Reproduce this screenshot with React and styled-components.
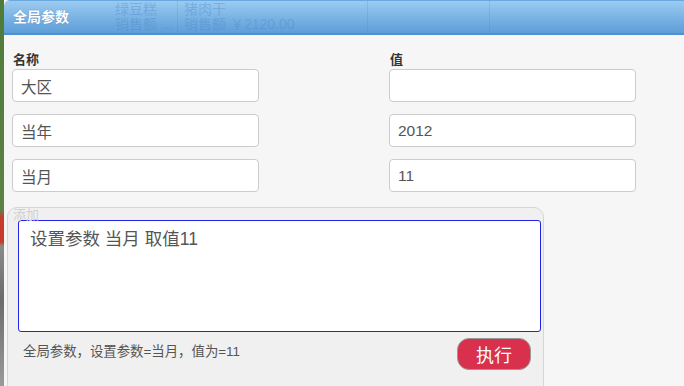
import React from 'react'
import styled, { createGlobalStyle } from 'styled-components'

const GlobalStyle = createGlobalStyle`
  html, body {
    margin: 0;
    padding: 0;
    background: #f5f5f5;
    font-family: "Microsoft YaHei", "Liberation Sans", "Noto Sans CJK SC", sans-serif;
  }
`

const Page = styled.div`
  display: flex;
  width: 684px;
  height: 386px;
  overflow: hidden;
`

const SideStrip = styled.div`
  width: 4px;
  flex-shrink: 0;
  background: linear-gradient(
    to bottom,
    #4f7a3a 0px,
    #5d8246 210px,
    #c83a2a 218px,
    #c83a2a 242px,
    #8a8a8a 246px,
    #6c6c6c 300px,
    #9a9a9a 386px
  );
`

const Dialog = styled.div`
  flex: 1;
  display: flex;
  flex-direction: column;
  background: #f6f6f6;
  border-top-left-radius: 6px;
  overflow: hidden;
`

const Header = styled.div`
  position: relative;
  flex-shrink: 0;
  height: 35px;
  box-sizing: border-box;
  display: flex;
  align-items: center;
  padding-left: 9px;
  background: linear-gradient(to bottom, #9ccbf0 0%, #7eb6e6 45%, #5e9ed8 100%);
  border-top: 1px solid #6aa8e0;
  border-bottom: 2px solid #4d8fd0;
  overflow: hidden;
`

const Title = styled.h1`
  position: relative;
  z-index: 1;
  margin: 0 0 2px;
  font-size: 14px;
  font-weight: bold;
  color: #ffffff;
  text-shadow: 0 0 1px rgba(40, 90, 160, 0.6);
`

const Ghost = styled.div`
  position: absolute;
  top: 0;
  left: ${p => p.left}px;
  width: ${p => p.width}px;
  height: 100%;
  padding: 1px 6px 0;
  box-sizing: border-box;
  font-size: 14px;
  line-height: 15px;
  color: rgba(70, 130, 200, 0.35);
  border-right: 1px solid rgba(70, 130, 200, 0.22);
  white-space: nowrap;
  overflow: hidden;
`

const Body = styled.div`
  flex: 1;
  padding: 17px 0 0 8px;
`

const FormGrid = styled.div`
  display: grid;
  grid-template-columns: 247px 247px;
  column-gap: 130px;
`

const Column = styled.div`
  display: flex;
  flex-direction: column;
  gap: 12px;
`

const Label = styled.label`
  display: block;
  font-size: 13px;
  font-weight: bold;
  color: #333;
  line-height: 15px;
  margin-bottom: -10px;
  padding-left: 1px;
`

const Input = styled.input`
  box-sizing: border-box;
  width: 247px;
  height: 33px;
  padding: 0 8px;
  border: 1px solid #cccccc;
  border-radius: 4px;
  background: #fff;
  font-family: inherit;
  font-size: 15.5px;
  color: #555;
  outline: none;
`

const Fieldset = styled.div`
  margin: 15px 0 0 -5px;
  width: 537px;
  height: 200px;
  box-sizing: border-box;
  border: 1px solid #d6d6d6;
  border-radius: 10px;
  background: #f0f0f0;
  padding: 0 2px 0 10px;
`

const Legend = styled.div`
  height: 12px;
  font-size: 13px;
  line-height: 14px;
  color: #d0d0d0;
  margin-left: -5px;
`

const TextArea = styled.textarea`
  display: block;
  box-sizing: border-box;
  width: 523px;
  height: 112px;
  padding: 4px 11px;
  border: 1px solid #2222ee;
  border-radius: 3px;
  background: #fff;
  resize: none;
  font-family: inherit;
  font-size: 17.5px;
  color: #555;
  outline: none;
`

const Footer = styled.div`
  display: flex;
  justify-content: space-between;
  align-items: flex-start;
  padding: 6px 10px 0 5px;
`

const Summary = styled.span`
  font-size: 13.4px;
  color: #555;
  margin-top: 2px;
`

const RunButton = styled.button`
  width: 74px;
  height: 32px;
  border: 1px solid #999;
  border-radius: 12px;
  background: #d9304e;
  color: #fff;
  font-family: inherit;
  font-size: 18px;
  cursor: pointer;
`

const rows = [
  { name: '大区', value: '' },
  { name: '当年', value: '2012' },
  { name: '当月', value: '11' },
]

export default function App() {
  return (
    <>
      <GlobalStyle />
      <Page>
        <SideStrip />
        <Dialog>
          <Header>
            <Ghost left={105} width={69}>绿豆糕<br />销售额 ...</Ghost>
            <Ghost left={174} width={190}>猪肉干<br />销售额 ￥2120.00</Ghost>
            <Ghost left={364} width={122} />
            <Title>全局参数</Title>
          </Header>
          <Body>
            <FormGrid>
              <Column>
                <Label>名称</Label>
                {rows.map(r => (
                  <Input key={r.name} defaultValue={r.name} />
                ))}
              </Column>
              <Column>
                <Label>值</Label>
                {rows.map(r => (
                  <Input key={r.name} defaultValue={r.value} />
                ))}
              </Column>
            </FormGrid>
            <Fieldset>
              <Legend>添加</Legend>
              <TextArea defaultValue="设置参数 当月 取值11" />
              <Footer>
                <Summary>全局参数，设置参数=当月，值为=11</Summary>
                <RunButton>执行</RunButton>
              </Footer>
            </Fieldset>
          </Body>
        </Dialog>
      </Page>
    </>
  )
}
